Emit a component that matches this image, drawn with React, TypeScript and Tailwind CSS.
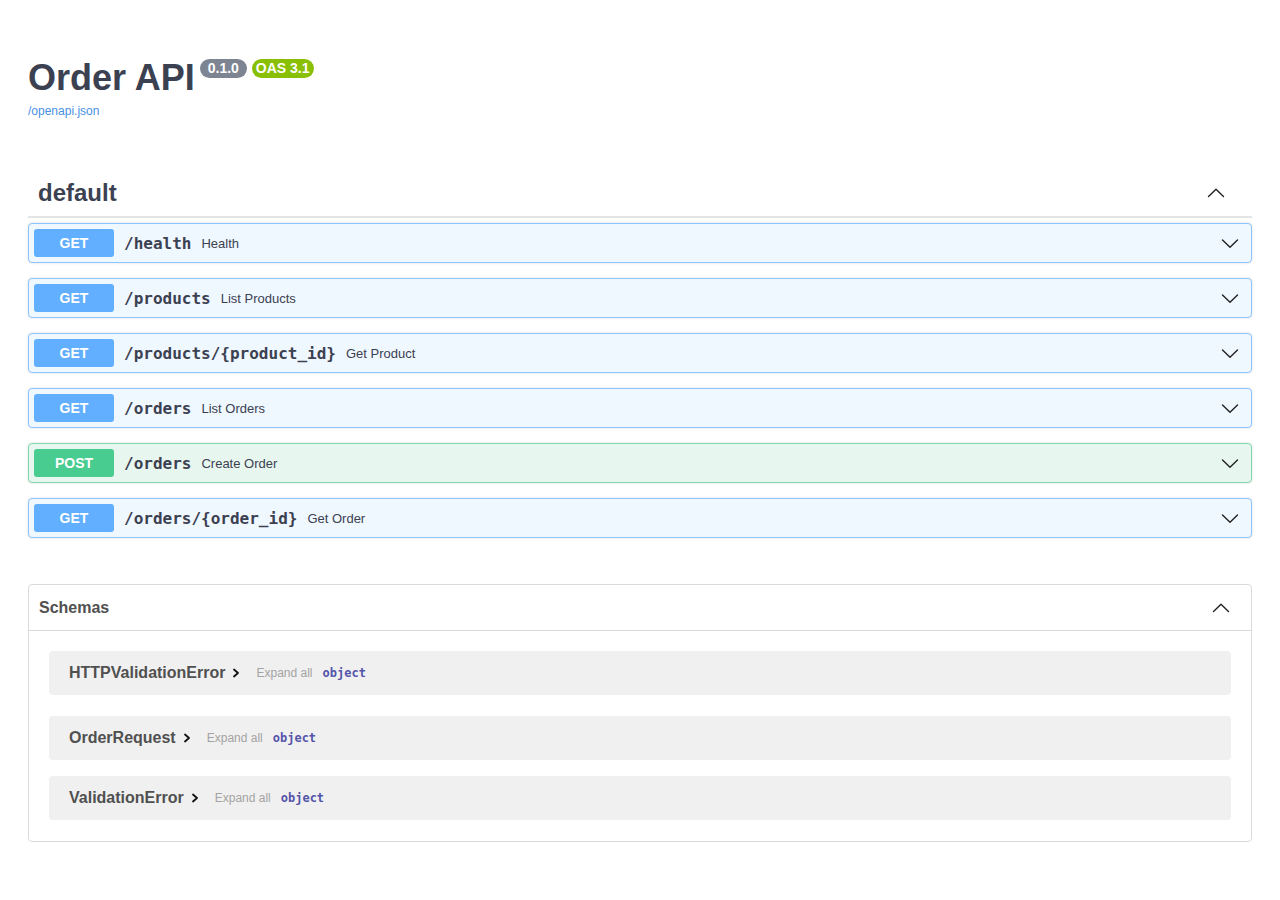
const sans = { fontFamily: '"Liberation Sans", Arial, sans-serif' };
const mono = { fontFamily: '"DejaVu Sans Mono", monospace' };

type TOp = {
  method: "GET" | "POST";
  path: string;
  summary: string;
};

const ops: TOp[] = [
  { method: "GET", path: "/health", summary: "Health" },
  { method: "GET", path: "/products", summary: "List Products" },
  { method: "GET", path: "/products/{product_id}", summary: "Get Product" },
  { method: "GET", path: "/orders", summary: "List Orders" },
  { method: "POST", path: "/orders", summary: "Create Order" },
  { method: "GET", path: "/orders/{order_id}", summary: "Get Order" },
];

const schemas = [
  { name: "HTTPValidationError", mb: "mb-[21px]" },
  { name: "OrderRequest", mb: "mb-4" },
  { name: "ValidationError", mb: "mb-[21px]" },
];

function ChevronDown() {
  return (
    <svg width="20" height="20" viewBox="0 0 20 20" fill="none">
      <path
        d="M2.5 7L10 14.2L17.5 7"
        stroke="#222"
        strokeWidth="1.4"
        strokeLinecap="round"
        strokeLinejoin="round"
      />
    </svg>
  );
}

function ChevronUp() {
  return (
    <svg width="20" height="20" viewBox="0 0 20 20" fill="none">
      <path
        d="M2.5 13.5L10 6.3L17.5 13.5"
        stroke="#222"
        strokeWidth="1.4"
        strokeLinecap="round"
        strokeLinejoin="round"
      />
    </svg>
  );
}

function OpBlock({ op }: { op: TOp }) {
  const isPost = op.method === "POST";
  return (
    <div
      className={`mb-[15px] flex items-center rounded-[4px] border p-[5px] shadow-[0_0_3px_rgba(0,0,0,0.12)] ${
        isPost
          ? "border-[#7fd8ad] bg-[#e8f6f0]"
          : "border-[#8cc4fd] bg-[#eff7ff]"
      }`}
    >
      <span
        className={`w-20 rounded-[3px] py-[6px] text-center text-sm leading-4 font-bold text-white ${
          isPost ? "bg-[#49cc90]" : "bg-[#61affe]"
        }`}
        style={sans}
      >
        {op.method}
      </span>
      <span
        className="px-[10px] pt-[1px] text-base leading-5 font-semibold text-[#3b4151]"
        style={mono}
      >
        {op.path}
      </span>
      <span className="text-[13px] text-[#3b4151]" style={sans}>
        {op.summary}
      </span>
      <span className="mr-[6px] ml-auto flex">
        <ChevronDown />
      </span>
    </div>
  );
}

export default function App() {
  return (
    <div className="min-h-[900px] bg-white px-[28px] pt-[57px]" style={sans}>
      <div className="flex items-start">
        <h1 className="text-[36px] leading-[1.15] font-bold text-[#3b4151]">
          Order API
        </h1>
        <span className="mt-[2px] ml-[5px] rounded-full bg-[#7d8492] px-[8px] py-[2px] text-sm leading-[15px] font-bold text-white">
          0.1.0
        </span>
        <span className="mt-[2px] ml-[5px] rounded-full bg-[#89bf04] px-[4px] py-[2px] text-sm leading-[15px] font-bold text-white">
          OAS 3.1
        </span>
      </div>
      <a className="mt-[5px] block text-xs text-[#4990e2]" href="#">
        /openapi.json
      </a>

      <div className="mt-[50px]">
        <div className="mb-[5px] flex items-center border-b-2 border-[#e4e4e4] py-[10px] pr-[26px] pl-[10px]">
          <h3 className="text-2xl leading-[27px] font-bold text-[#3b4151]">
            default
          </h3>
          <span className="ml-auto flex">
            <ChevronUp />
          </span>
        </div>
        {ops.map((op) => (
          <OpBlock key={op.method + op.path} op={op} />
        ))}
      </div>

      <section className="mt-[46px] rounded-[4px] border border-[#d9dadd]">
        <div className="flex h-[46px] items-center border-b border-[#d9dadd] pr-5 pl-[10px]">
          <h4 className="text-base font-bold text-[#505050]">Schemas</h4>
          <span className="ml-auto flex">
            <ChevronUp />
          </span>
        </div>
        <div className="pt-5">
          {schemas.map((s) => (
            <div
              key={s.name}
              className={`mx-5 flex h-[44px] items-center rounded-[4px] bg-[#f0f0f0] pl-5 ${s.mb}`}
            >
              <span className="text-base font-bold text-[#505050]">
                {s.name}
              </span>
              <svg
                className="ml-[6px]"
                width="10"
                height="12"
                viewBox="0 0 10 12"
                fill="none"
              >
                <path
                  d="M3 2.5L7 6L3 9.5"
                  stroke="#111"
                  strokeWidth="1.8"
                  strokeLinecap="round"
                  strokeLinejoin="round"
                />
              </svg>
              <span className="ml-[15px] text-xs text-[#a3a3a3]">
                Expand all
              </span>
              <span
                className="ml-[10px] text-xs font-bold text-[#55a]"
                style={mono}
              >
                object
              </span>
            </div>
          ))}
        </div>
      </section>
    </div>
  );
}
